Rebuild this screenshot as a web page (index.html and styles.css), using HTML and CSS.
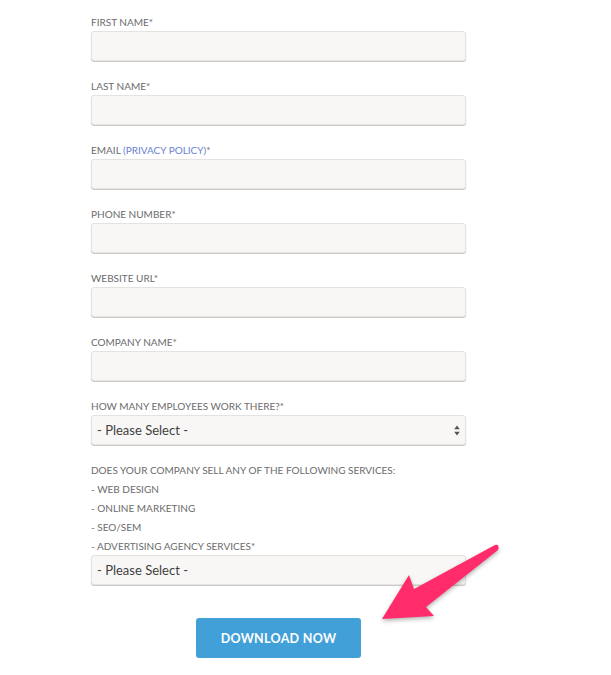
FILE: index.html
```html
<!DOCTYPE html>
<html>
<head>
<meta charset="utf-8">
<link rel="stylesheet" href="styles.css">
</head>
<body>
<div class="page">
  <form class="form">
    <div class="field">
      <label class="label">FIRST NAME*</label>
      <div class="input"></div>
    </div>
    <div class="field">
      <label class="label">LAST NAME*</label>
      <div class="input"></div>
    </div>
    <div class="field">
      <label class="label">EMAIL <span class="link">(PRIVACY POLICY)</span>*</label>
      <div class="input"></div>
    </div>
    <div class="field">
      <label class="label">PHONE NUMBER*</label>
      <div class="input"></div>
    </div>
    <div class="field">
      <label class="label">WEBSITE URL*</label>
      <div class="input"></div>
    </div>
    <div class="field">
      <label class="label">COMPANY NAME*</label>
      <div class="input"></div>
    </div>
    <div class="field">
      <label class="label">HOW MANY EMPLOYEES WORK THERE?*</label>
      <div class="input select">
        <span class="select-text">- Please Select -</span>
        <svg class="select-icon" width="6" height="11" viewBox="0 0 6 11"><path d="M3 0.5 L5.8 4.2 H0.2 Z M3 10.5 L5.8 6.8 H0.2 Z" fill="#555"/></svg>
      </div>
    </div>
    <div class="field">
      <div class="label-lines">
        <div class="label">DOES YOUR COMPANY SELL ANY OF THE FOLLOWING SERVICES:</div>
        <div class="label">- WEB DESIGN</div>
        <div class="label">- ONLINE MARKETING</div>
        <div class="label">- SEO/SEM</div>
        <div class="label">- ADVERTISING AGENCY SERVICES*</div>
      </div>
      <div class="input select">
        <span class="select-text">- Please Select -</span>
        <svg class="select-icon" width="6" height="11" viewBox="0 0 6 11"><path d="M3 0.5 L5.8 4.2 H0.2 Z M3 10.5 L5.8 6.8 H0.2 Z" fill="#555"/></svg>
      </div>
    </div>
    <div class="actions">
      <button type="button" class="button">DOWNLOAD NOW</button>
    </div>
  </form>
  <svg class="pointer" width="140" height="100" viewBox="0 0 140 100">
    <path d="M12 84 L39 40 L44 54 L125 10 Q130 9 128 15 L56 72 L64 81 Z" fill="#ff2b6a"/>
  </svg>
</div>
</body>
</html>
```

FILE: styles.css
```css
* { box-sizing: border-box; }
html, body { margin: 0; padding: 0; background: #fff; }
body { font-family: Lato, "Liberation Sans", sans-serif; }
.page { position: relative; width: 611px; height: 675px; overflow: hidden; }
.form { width: 375px; margin-left: 91px; padding-top: 15px; }
.field { margin-bottom: 18px; }
.label { display: block; font-size: 10px; line-height: 14px; color: #6b6b6b; letter-spacing: 0; margin-bottom: 2px; }
.label-lines { display: flex; flex-direction: column; gap: 5px; margin-bottom: 2px; }
.label-lines .label { margin-bottom: 0; }
.link { color: #6a7fd0; }
.input { height: 30px; background: #f8f7f5; border: 1px solid #e4e3e1; border-radius: 3px; box-shadow: 0 1px 1px rgba(0,0,0,0.22); }
.select { display: flex; align-items: center; justify-content: space-between; padding: 0 5px 0 5px; }
.select-text { font-size: 13px; color: #3f3f3f; letter-spacing: 0; }
.select-icon { display: block; }
.actions { display: flex; justify-content: center; padding-top: 15px; }
.button { width: 165px; height: 40px; background: #42a0d9; border: none; border-radius: 3px; color: #fff; font-family: Lato, "Liberation Sans", sans-serif; font-weight: 700; font-size: 12.5px; letter-spacing: 0.3px; }
.pointer { position: absolute; left: 370px; top: 535px; filter: drop-shadow(0 2px 2px rgba(0,0,0,0.3)); }
```
